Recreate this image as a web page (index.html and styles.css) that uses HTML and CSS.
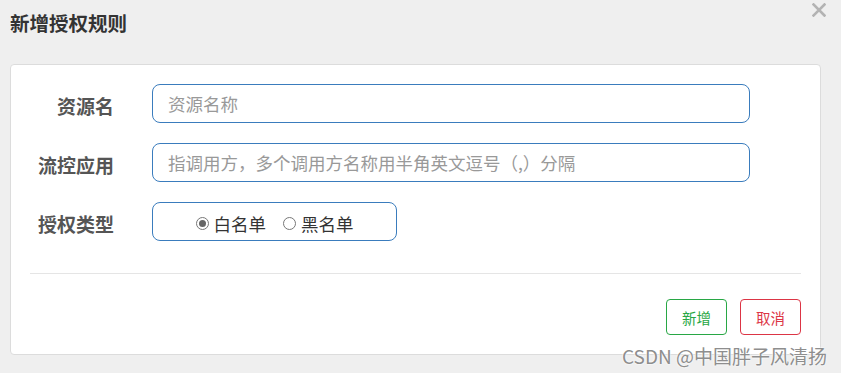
FILE: index.html
```html
<!DOCTYPE html>
<html lang="zh-CN">
<head>
    <meta charset="UTF-8">
    <title>新增授权规则</title>
    <link rel="stylesheet" href="styles.css">
</head>
<body>
    <div class="dialog-header">
        <h1 class="dialog-title">新增授权规则</h1>
        <span class="dialog-close">
            <svg width="14" height="14" viewBox="0 0 14 14">
                <path d="M1.5 1.5 L12.5 12.5 M12.5 1.5 L1.5 12.5" stroke="#b3b3b3" stroke-width="2.6" stroke-linecap="square"/>
            </svg>
        </span>
    </div>

    <div class="panel">
        <form class="rule-form" onsubmit="event.preventDefault();">
            <label class="form-label" for="resource">资源名</label>
            <input class="form-input" type="text" id="resource" placeholder="资源名称">

            <label class="form-label" for="limitApp">流控应用</label>
            <input class="form-input" type="text" id="limitApp" placeholder="指调用方，多个调用方名称用半角英文逗号（,）分隔">

            <span class="form-label">授权类型</span>
            <div class="radio-box">
                <label class="radio-item"><span class="radio-dot checked"></span>白名单</label>
                <label class="radio-item"><span class="radio-dot"></span>黑名单</label>
            </div>
        </form>

        <div class="divider"></div>

        <div class="panel-footer">
            <button class="btn btn-add" type="button">新增</button>
            <button class="btn btn-cancel" type="button">取消</button>
        </div>
    </div>

    <div class="watermark">CSDN @中国胖子风清扬</div>
</body>
</html>
```

FILE: styles.css
```css
/* 全体 */
body {
    margin: 0;
    padding: 0 10px;
    background-color: #efefef;
    font-family: "Noto Sans CJK SC", "Noto Sans", sans-serif;
    color: #333;
    position: relative;
    height: 373px;
    box-sizing: border-box;
    overflow: hidden;
}

/* タイトル */
.dialog-header {
    height: 64px;
    box-sizing: border-box;
    padding-top: 9px;
}

.dialog-title {
    margin: 0;
    font-size: 19.5px;
    line-height: 28px;
    font-weight: bold;
    color: #333;
}

.dialog-close {
    position: absolute;
    top: 3px;
    right: 15px;
    width: 14px;
    height: 14px;
}

.dialog-close svg {
    display: block;
}

/* パネル */
.panel {
    width: 811px;
    box-sizing: border-box;
    background-color: #fff;
    border: 1px solid #dcdcdc;
    border-radius: 4px;
    padding: 19px 0;
}

.rule-form {
    display: grid;
    grid-template-columns: 103px 598px;
    column-gap: 38px;
    row-gap: 20px;
    align-items: center;
}

.form-label {
    text-align: right;
    font-size: 19px;
    font-weight: bold;
    color: #555;
    padding-top: 4px;
}

.form-input {
    height: 39px;
    box-sizing: border-box;
    border: 1px solid #3a7cbd;
    border-radius: 8px;
    padding: 0 15px;
    font-family: inherit;
    font-size: 17.5px;
    color: #333;
    outline: none;
}

.form-input::placeholder {
    color: #999;
}

.radio-box {
    width: 245px;
    height: 39px;
    box-sizing: border-box;
    border: 1px solid #3a7cbd;
    border-radius: 8px;
    display: flex;
    justify-content: center;
    align-items: center;
    gap: 17px;
    font-size: 17.5px;
    color: #333;
    padding-top: 3px;
}

.radio-item {
    display: flex;
    align-items: center;
    gap: 5px;
}

.radio-dot {
    width: 13px;
    height: 13px;
    box-sizing: border-box;
    border: 1px solid #777;
    border-radius: 50%;
    display: flex;
    align-items: center;
    justify-content: center;
}

.radio-dot.checked::after {
    content: "";
    width: 7px;
    height: 7px;
    border-radius: 50%;
    background-color: #666;
}

.divider {
    height: 1px;
    background-color: #e5e5e5;
    margin: 32px 19px 0;
}

/* ボタン */
.panel-footer {
    display: flex;
    justify-content: flex-end;
    gap: 13px;
    padding: 25px 19px 0;
}

.btn {
    width: 61px;
    height: 36px;
    background-color: #fff;
    border-radius: 4px;
    font-family: inherit;
    font-size: 14.5px;
    cursor: pointer;
    padding: 0;
}

.btn-add {
    color: #28a745;
    border: 1px solid #28a745;
}

.btn-cancel {
    color: #dc3545;
    border: 1px solid #dc3545;
}

/* 透かし */
.watermark {
    position: absolute;
    right: 14px;
    bottom: 4px;
    font-size: 19px;
    color: #8e8e8e;
    text-shadow: 0 0 2px #fff, 0 0 2px #fff;
    white-space: nowrap;
}
```
